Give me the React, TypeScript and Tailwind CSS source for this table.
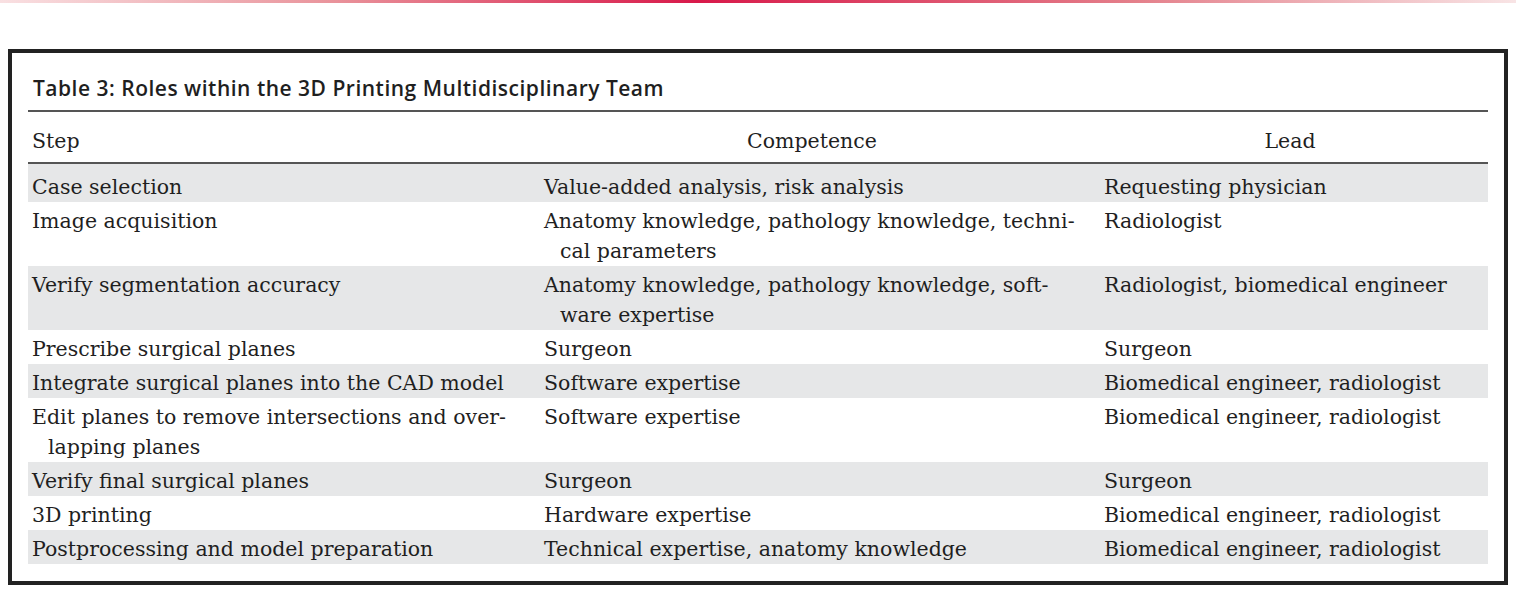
const rows: { step: string[]; competence: string[]; lead: string[] }[] = [
  { step: ["Case selection"], competence: ["Value-added analysis, risk analysis"], lead: ["Requesting physician"] },
  { step: ["Image acquisition"], competence: ["Anatomy knowledge, pathology knowledge, techni-", "cal parameters"], lead: ["Radiologist"] },
  { step: ["Verify segmentation accuracy"], competence: ["Anatomy knowledge, pathology knowledge, soft-", "ware expertise"], lead: ["Radiologist, biomedical engineer"] },
  { step: ["Prescribe surgical planes"], competence: ["Surgeon"], lead: ["Surgeon"] },
  { step: ["Integrate surgical planes into the CAD model"], competence: ["Software expertise"], lead: ["Biomedical engineer, radiologist"] },
  { step: ["Edit planes to remove intersections and over-", "lapping planes"], competence: ["Software expertise"], lead: ["Biomedical engineer, radiologist"] },
  { step: ["Verify final surgical planes"], competence: ["Surgeon"], lead: ["Surgeon"] },
  { step: ["3D printing"], competence: ["Hardware expertise"], lead: ["Biomedical engineer, radiologist"] },
  { step: ["Postprocessing and model preparation"], competence: ["Technical expertise, anatomy knowledge"], lead: ["Biomedical engineer, radiologist"] },
];

function Lines({ lines }: { lines: string[] }) {
  return (
    <>
      {lines.map((l, i) => (
        <span key={i}>
          {i > 0 && <br />}
          {l}
        </span>
      ))}
    </>
  );
}

export default function App() {
  return (
    <div className="min-h-screen bg-white">
      <div className="h-[3px] bg-[linear-gradient(90deg,#f9e0e2_0%,#e9939b_22%,#d8194a_46%,#e4808b_75%,#f8e4e5_100%)]" />
      <div className="mx-2 mt-[46px] border-4 border-[#222] bg-white px-4 pb-[17px]">
        <h2 className="pl-[5px] pt-[23px] pb-[10px] text-[21px] leading-6 font-semibold tracking-[0.5px] text-[#1f1f1f] [font-family:'Open_Sans',sans-serif]">
          Table 3: Roles within the 3D Printing Multidisciplinary Team
        </h2>
        <table className="w-full table-fixed border-collapse text-[20.5px] leading-[30px] text-[#1f1f1f] [font-family:'DejaVu_Serif',serif]">
          <colgroup>
            <col className="w-[504px]" />
            <col className="w-[560px]" />
            <col />
          </colgroup>
          <thead>
            <tr>
              <th className="border-y-2 border-[#555] pl-1 pt-[14px] pb-[6px] text-left font-normal">Step</th>
              <th className="border-y-2 border-[#555] pt-[14px] pb-[6px] text-center font-normal">Competence</th>
              <th className="border-y-2 border-[#555] pt-[14px] pb-[6px] text-center font-normal">Lead</th>
            </tr>
          </thead>
          <tbody>
            {rows.map((r, i) => (
              <tr key={i} className={i % 2 === 0 ? "bg-[#e6e7e8]" : ""}>
                <td className={`whitespace-nowrap pl-5 -indent-4 align-top ${i === 0 ? "pt-2" : "pt-1"}`}>
                  <Lines lines={r.step} />
                </td>
                <td className={`whitespace-nowrap pl-7 -indent-4 align-top ${i === 0 ? "pt-2" : "pt-1"}`}>
                  <Lines lines={r.competence} />
                </td>
                <td className={`whitespace-nowrap pl-7 -indent-4 align-top ${i === 0 ? "pt-2" : "pt-1"}`}>
                  <Lines lines={r.lead} />
                </td>
              </tr>
            ))}
          </tbody>
        </table>
      </div>
    </div>
  );
}
